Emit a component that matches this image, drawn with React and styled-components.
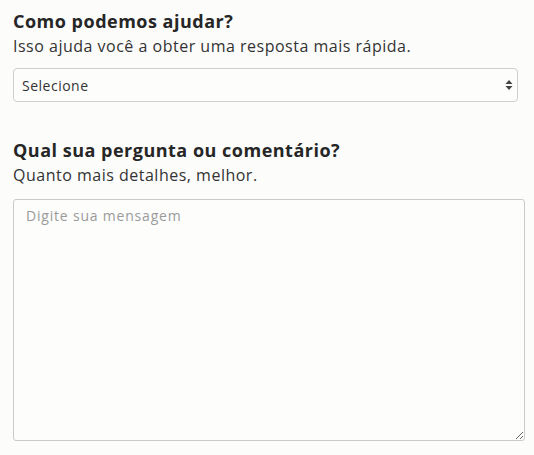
import styled, { createGlobalStyle } from "styled-components";

const GlobalStyle = createGlobalStyle`
  body {
    margin: 0;
    background: #fcfcfb;
    font-family: "Open Sans", "Liberation Sans", sans-serif;
    color: #2b2b2b;
  }
`;

const Page = styled.div`
  padding: 9px 9px 15px 13px;
  display: flex;
  flex-direction: column;
`;

const Field = styled.div`
  display: flex;
  flex-direction: column;
  margin-bottom: ${(p) => p.$gap || 0}px;
`;

const Title = styled.h2`
  margin: 0;
  font-size: 18px;
  line-height: 25px;
  font-weight: 700;
  letter-spacing: 0.5px;
  color: #262626;
`;

const Hint = styled.p`
  margin: 0 0 ${(p) => p.$space || 10}px;
  font-size: 16px;
  line-height: 24px;
  letter-spacing: 0.5px;
  color: #333;
`;

const SelectBox = styled.div`
  position: relative;
  width: 505px;
`;

const Select = styled.select`
  appearance: none;
  width: 100%;
  height: 34px;
  box-sizing: border-box;
  padding: 0 24px 0 8px;
  border: 1px solid #cfcfcf;
  border-radius: 4px;
  background: #fdfdfc;
  font-family: inherit;
  font-size: 14px;
  letter-spacing: 0.5px;
  color: #333;
  outline: none;
`;

const Arrows = styled.svg`
  position: absolute;
  right: 5px;
  top: 50%;
  transform: translateY(-50%);
  pointer-events: none;
`;

const Message = styled.textarea`
  width: 512px;
  height: 242px;
  box-sizing: border-box;
  padding: 6px 12px;
  border: 1px solid #cbcbcb;
  border-radius: 3px;
  background: #fdfdfc;
  font-family: inherit;
  font-size: 14px;
  letter-spacing: 0.8px;
  color: #333;
  outline: none;
  &::placeholder {
    color: #9a9a9a;
  }
`;

export default function App() {
  return (
    <Page>
      <GlobalStyle />
      <Field $gap={36}>
        <Title>Como podemos ajudar?</Title>
        <Hint>Isso ajuda você a obter uma resposta mais rápida.</Hint>
        <SelectBox>
          <Select defaultValue="">
            <option value="">Selecione</option>
            <option value="duvida">Dúvida</option>
            <option value="problema">Problema</option>
            <option value="sugestao">Sugestão</option>
          </Select>
          <Arrows width="8" height="12" viewBox="0 0 8 12">
            <path d="M4 1 L7.5 5 H0.5 Z" fill="#444" />
            <path d="M4 11 L7.5 7 H0.5 Z" fill="#444" />
          </Arrows>
        </SelectBox>
      </Field>
      <Field>
        <Title>Qual sua pergunta ou comentário?</Title>
        <Hint $space={12}>Quanto mais detalhes, melhor.</Hint>
        <Message placeholder="Digite sua mensagem" />
      </Field>
    </Page>
  );
}
